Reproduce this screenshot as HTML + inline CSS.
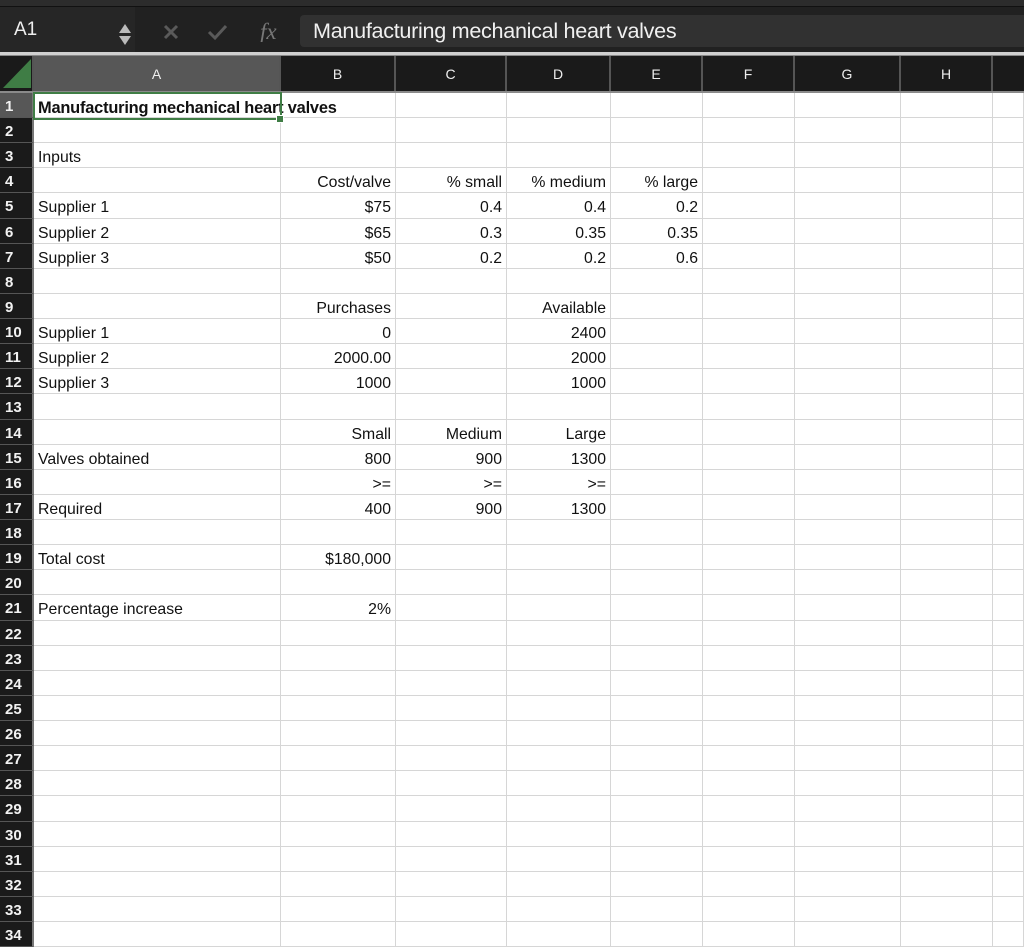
<!DOCTYPE html>
<html><head><meta charset="utf-8"><style>
*{box-sizing:border-box;margin:0;padding:0}
body{width:1024px;height:942px;overflow:hidden;background:#fff;font-family:"Liberation Sans",sans-serif;position:relative}
.top{position:absolute;left:0;top:0;width:1024px;height:7px;background:#2c2c2c;border-bottom:1px solid #111}
.tb{position:absolute;left:0;top:7px;width:1024px;height:46px;background:#212121}
.nb{position:absolute;left:0;top:7px;width:135px;height:46px;background:#262626}
.sep{position:absolute;left:0;top:52px;width:1024px;height:4px;background:#d0d0d0;border-bottom:1px solid #888}
.fbox{position:absolute;left:300px;top:15px;width:724px;height:32px;background:#313131;border-radius:4px 0 0 4px}
.hdr{position:absolute;left:0;top:56px;width:1024px;height:37px;background:#1a1a1a;display:flex;border-bottom:2px solid #8a8a8a}
.hdr div{height:35px;border-right:2px solid #555;color:#eee;font-size:14px;line-height:37px;text-align:center}
.grid{position:absolute;left:0;top:93px;width:1024px}
.r{display:flex;height:25.125px}
.r>div{border-right:1px solid #d6d6d6;border-bottom:1px solid #d6d6d6;font-size:15.8px;line-height:30px;height:25.125px;white-space:nowrap;color:#111;padding:0 4px;overflow:visible}
.r>div:first-child{background:#1a1a1a;color:#f2f2f2;border-right:2px solid #777;border-bottom:1px solid #555;font-weight:bold;font-size:15px;line-height:28px;padding:0 0 0 5px}
.c0{width:34px}.c1{width:247px}.c2{width:115px}.c3{width:111px}.c4{width:104px}.c5{width:92px}.c6{width:92px}.c7{width:106px}.c8{width:92px}.c9{width:31px}
.rt{text-align:right}
</style></head><body>
<div class="top"></div><div class="tb"></div><div class="nb"></div>
<div style="position:absolute;left:14px;top:19px;color:#eee;font-size:19px">A1</div>
<div style="position:absolute;left:119px;top:24px;width:0;height:0;border-left:6px solid transparent;border-right:6px solid transparent;border-bottom:9px solid #bbb"></div>
<div style="position:absolute;left:119px;top:36px;width:0;height:0;border-left:6px solid transparent;border-right:6px solid transparent;border-top:9px solid #bbb"></div>
<svg style="position:absolute;left:160px;top:22px" width="140" height="20"><path d="M5 4L17 16M17 4L5 16" stroke="#5a5a5a" stroke-width="3"/><path d="M49 10L55 16L66 4" stroke="#5a5a5a" stroke-width="3" fill="none"/><text x="100" y="17" font-family="Liberation Serif" font-style="italic" font-size="23" fill="#777">fx</text></svg>
<div class="fbox"></div>
<div style="position:absolute;left:313px;top:18px;color:#f0f0f0;font-size:21.6px;letter-spacing:-0.3px">Manufacturing mechanical heart valves</div>
<div class="sep"></div>
<div class="hdr">
<div style="width:34px;position:relative;background:#1a1a1a"><svg style="position:absolute;left:3px;top:3px" width="28" height="29"><path d="M28 0L28 29L0 29Z" fill="#3f7d45"/></svg></div>
<div style="width:247px;background:#575757">A</div><div style="width:115px">B</div><div style="width:111px">C</div><div style="width:104px">D</div><div style="width:92px">E</div><div style="width:92px">F</div><div style="width:106px">G</div><div style="width:92px">H</div><div style="width:31px;border:none"></div>
</div>
<div class="grid">
<div class="r" style="height:25px"><div class="c0" style="background:#575757">1</div><div class="c1" style="font-weight:bold;font-size:16.4px;letter-spacing:-0.2px;position:relative;z-index:2">Manufacturing mechanical heart valves</div><div class="c2"></div><div class="c3"></div><div class="c4"></div><div class="c5"></div><div class="c6"></div><div class="c7"></div><div class="c8"></div><div class="c9"></div></div>
<div class="r"><div class="c0">2</div><div class="c1"></div><div class="c2"></div><div class="c3"></div><div class="c4"></div><div class="c5"></div><div class="c6"></div><div class="c7"></div><div class="c8"></div><div class="c9"></div></div>
<div class="r"><div class="c0">3</div><div class="c1">Inputs</div><div class="c2"></div><div class="c3"></div><div class="c4"></div><div class="c5"></div><div class="c6"></div><div class="c7"></div><div class="c8"></div><div class="c9"></div></div>
<div class="r"><div class="c0">4</div><div class="c1"></div><div class="c2 rt">Cost/valve</div><div class="c3 rt">% small</div><div class="c4 rt">% medium</div><div class="c5 rt">% large</div><div class="c6"></div><div class="c7"></div><div class="c8"></div><div class="c9"></div></div>
<div class="r"><div class="c0">5</div><div class="c1">Supplier 1</div><div class="c2 rt">$75</div><div class="c3 rt">0.4</div><div class="c4 rt">0.4</div><div class="c5 rt">0.2</div><div class="c6"></div><div class="c7"></div><div class="c8"></div><div class="c9"></div></div>
<div class="r"><div class="c0">6</div><div class="c1">Supplier 2</div><div class="c2 rt">$65</div><div class="c3 rt">0.3</div><div class="c4 rt">0.35</div><div class="c5 rt">0.35</div><div class="c6"></div><div class="c7"></div><div class="c8"></div><div class="c9"></div></div>
<div class="r"><div class="c0">7</div><div class="c1">Supplier 3</div><div class="c2 rt">$50</div><div class="c3 rt">0.2</div><div class="c4 rt">0.2</div><div class="c5 rt">0.6</div><div class="c6"></div><div class="c7"></div><div class="c8"></div><div class="c9"></div></div>
<div class="r"><div class="c0">8</div><div class="c1"></div><div class="c2"></div><div class="c3"></div><div class="c4"></div><div class="c5"></div><div class="c6"></div><div class="c7"></div><div class="c8"></div><div class="c9"></div></div>
<div class="r"><div class="c0">9</div><div class="c1"></div><div class="c2 rt">Purchases</div><div class="c3"></div><div class="c4 rt">Available</div><div class="c5"></div><div class="c6"></div><div class="c7"></div><div class="c8"></div><div class="c9"></div></div>
<div class="r"><div class="c0">10</div><div class="c1">Supplier 1</div><div class="c2 rt">0</div><div class="c3"></div><div class="c4 rt">2400</div><div class="c5"></div><div class="c6"></div><div class="c7"></div><div class="c8"></div><div class="c9"></div></div>
<div class="r"><div class="c0">11</div><div class="c1">Supplier 2</div><div class="c2 rt">2000.00</div><div class="c3"></div><div class="c4 rt">2000</div><div class="c5"></div><div class="c6"></div><div class="c7"></div><div class="c8"></div><div class="c9"></div></div>
<div class="r"><div class="c0">12</div><div class="c1">Supplier 3</div><div class="c2 rt">1000</div><div class="c3"></div><div class="c4 rt">1000</div><div class="c5"></div><div class="c6"></div><div class="c7"></div><div class="c8"></div><div class="c9"></div></div>
<div class="r"><div class="c0">13</div><div class="c1"></div><div class="c2"></div><div class="c3"></div><div class="c4"></div><div class="c5"></div><div class="c6"></div><div class="c7"></div><div class="c8"></div><div class="c9"></div></div>
<div class="r"><div class="c0">14</div><div class="c1"></div><div class="c2 rt">Small</div><div class="c3 rt">Medium</div><div class="c4 rt">Large</div><div class="c5"></div><div class="c6"></div><div class="c7"></div><div class="c8"></div><div class="c9"></div></div>
<div class="r"><div class="c0">15</div><div class="c1">Valves obtained</div><div class="c2 rt">800</div><div class="c3 rt">900</div><div class="c4 rt">1300</div><div class="c5"></div><div class="c6"></div><div class="c7"></div><div class="c8"></div><div class="c9"></div></div>
<div class="r"><div class="c0">16</div><div class="c1"></div><div class="c2 rt">&gt;=</div><div class="c3 rt">&gt;=</div><div class="c4 rt">&gt;=</div><div class="c5"></div><div class="c6"></div><div class="c7"></div><div class="c8"></div><div class="c9"></div></div>
<div class="r"><div class="c0">17</div><div class="c1">Required</div><div class="c2 rt">400</div><div class="c3 rt">900</div><div class="c4 rt">1300</div><div class="c5"></div><div class="c6"></div><div class="c7"></div><div class="c8"></div><div class="c9"></div></div>
<div class="r"><div class="c0">18</div><div class="c1"></div><div class="c2"></div><div class="c3"></div><div class="c4"></div><div class="c5"></div><div class="c6"></div><div class="c7"></div><div class="c8"></div><div class="c9"></div></div>
<div class="r"><div class="c0">19</div><div class="c1">Total cost</div><div class="c2 rt">$180,000</div><div class="c3"></div><div class="c4"></div><div class="c5"></div><div class="c6"></div><div class="c7"></div><div class="c8"></div><div class="c9"></div></div>
<div class="r"><div class="c0">20</div><div class="c1"></div><div class="c2"></div><div class="c3"></div><div class="c4"></div><div class="c5"></div><div class="c6"></div><div class="c7"></div><div class="c8"></div><div class="c9"></div></div>
<div class="r"><div class="c0">21</div><div class="c1">Percentage increase</div><div class="c2 rt">2%</div><div class="c3"></div><div class="c4"></div><div class="c5"></div><div class="c6"></div><div class="c7"></div><div class="c8"></div><div class="c9"></div></div>
<div class="r"><div class="c0">22</div><div class="c1"></div><div class="c2"></div><div class="c3"></div><div class="c4"></div><div class="c5"></div><div class="c6"></div><div class="c7"></div><div class="c8"></div><div class="c9"></div></div>
<div class="r"><div class="c0">23</div><div class="c1"></div><div class="c2"></div><div class="c3"></div><div class="c4"></div><div class="c5"></div><div class="c6"></div><div class="c7"></div><div class="c8"></div><div class="c9"></div></div>
<div class="r"><div class="c0">24</div><div class="c1"></div><div class="c2"></div><div class="c3"></div><div class="c4"></div><div class="c5"></div><div class="c6"></div><div class="c7"></div><div class="c8"></div><div class="c9"></div></div>
<div class="r"><div class="c0">25</div><div class="c1"></div><div class="c2"></div><div class="c3"></div><div class="c4"></div><div class="c5"></div><div class="c6"></div><div class="c7"></div><div class="c8"></div><div class="c9"></div></div>
<div class="r"><div class="c0">26</div><div class="c1"></div><div class="c2"></div><div class="c3"></div><div class="c4"></div><div class="c5"></div><div class="c6"></div><div class="c7"></div><div class="c8"></div><div class="c9"></div></div>
<div class="r"><div class="c0">27</div><div class="c1"></div><div class="c2"></div><div class="c3"></div><div class="c4"></div><div class="c5"></div><div class="c6"></div><div class="c7"></div><div class="c8"></div><div class="c9"></div></div>
<div class="r"><div class="c0">28</div><div class="c1"></div><div class="c2"></div><div class="c3"></div><div class="c4"></div><div class="c5"></div><div class="c6"></div><div class="c7"></div><div class="c8"></div><div class="c9"></div></div>
<div class="r"><div class="c0">29</div><div class="c1"></div><div class="c2"></div><div class="c3"></div><div class="c4"></div><div class="c5"></div><div class="c6"></div><div class="c7"></div><div class="c8"></div><div class="c9"></div></div>
<div class="r"><div class="c0">30</div><div class="c1"></div><div class="c2"></div><div class="c3"></div><div class="c4"></div><div class="c5"></div><div class="c6"></div><div class="c7"></div><div class="c8"></div><div class="c9"></div></div>
<div class="r"><div class="c0">31</div><div class="c1"></div><div class="c2"></div><div class="c3"></div><div class="c4"></div><div class="c5"></div><div class="c6"></div><div class="c7"></div><div class="c8"></div><div class="c9"></div></div>
<div class="r"><div class="c0">32</div><div class="c1"></div><div class="c2"></div><div class="c3"></div><div class="c4"></div><div class="c5"></div><div class="c6"></div><div class="c7"></div><div class="c8"></div><div class="c9"></div></div>
<div class="r"><div class="c0">33</div><div class="c1"></div><div class="c2"></div><div class="c3"></div><div class="c4"></div><div class="c5"></div><div class="c6"></div><div class="c7"></div><div class="c8"></div><div class="c9"></div></div>
<div class="r"><div class="c0">34</div><div class="c1"></div><div class="c2"></div><div class="c3"></div><div class="c4"></div><div class="c5"></div><div class="c6"></div><div class="c7"></div><div class="c8"></div><div class="c9"></div></div>
</div>
<div style="position:absolute;left:33px;top:92px;width:249px;height:28px;border:2px solid #3f7d45;z-index:3"></div>
<div style="position:absolute;left:276px;top:115px;width:8px;height:8px;background:#3f7d45;border:1px solid #fff;z-index:4"></div>
</body></html>
